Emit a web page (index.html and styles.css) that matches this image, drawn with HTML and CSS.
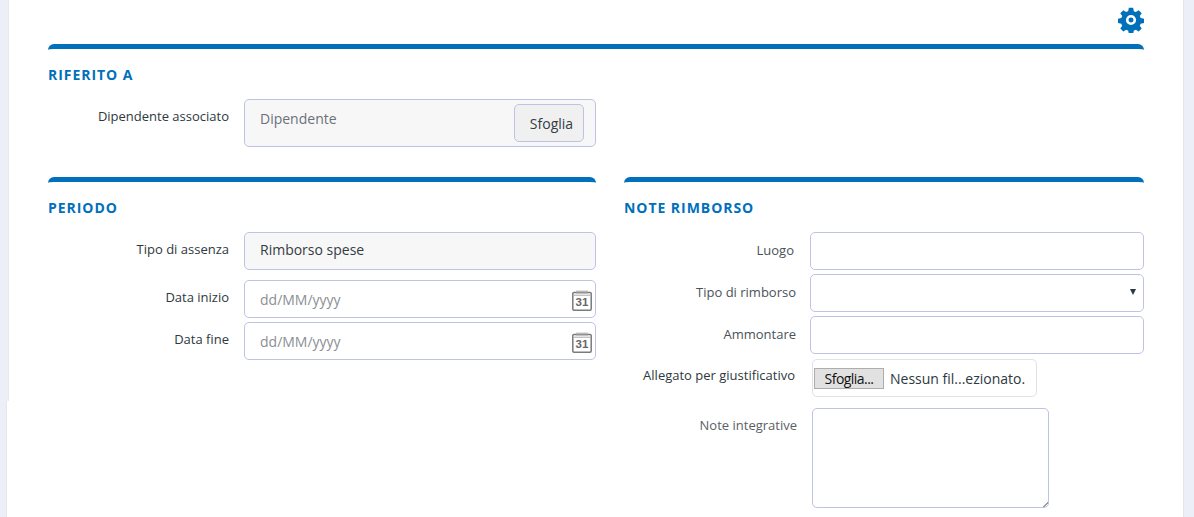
FILE: index.html
```html
<!DOCTYPE html>
<html lang="it">
<head>
<meta charset="utf-8">
<title>Rimborso spese</title>
<link rel="stylesheet" href="styles.css">
</head>
<body>
<div class="shell">
  <div class="toolbar">
    <svg class="gear" viewBox="0 0 24 24" width="26" height="26" aria-hidden="true"><path fill="#0070bb" fill-rule="evenodd" d="M10 0.8h4l.6 3.1c.7.2 1.3.5 1.9.8l2.6-1.8 2.8 2.8-1.8 2.6c.4.6.6 1.2.8 1.9l3.1.6v4l-3.1.6c-.2.7-.5 1.3-.8 1.9l1.8 2.6-2.8 2.8-2.6-1.8c-.6.4-1.2.6-1.9.8l-.6 3.1h-4l-.6-3.1c-.7-.2-1.3-.5-1.9-.8l-2.6 1.8-2.8-2.8 1.8-2.6c-.4-.6-.6-1.2-.8-1.9l-3.1-.6v-4l3.1-.6c.2-.7.5-1.3.8-1.9L2.1 5.7l2.8-2.8 2.6 1.8c.6-.4 1.2-.6 1.9-.8zM12 7.3a4.7 4.7 0 1 0 0 9.4 4.7 4.7 0 0 0 0-9.4zM12 9.7a2.3 2.3 0 1 1 0 4.6 2.3 2.3 0 0 1 0-4.6z"/></svg>
  </div>

  <section class="section section-top">
    <h2 class="heading">RIFERITO A</h2>
    <div class="row">
      <label class="label label-top">Dipendente associato</label>
      <div class="lookup">
        <span class="lookup-text">Dipendente</span>
        <button class="browse" type="button">Sfoglia</button>
      </div>
    </div>
  </section>

  <div class="columns">
    <section class="section col-left">
      <h2 class="heading">PERIODO</h2>
      <div class="row row-first">
        <label class="label">Tipo di assenza</label>
        <div class="readonly">Rimborso spese</div>
      </div>
      <div class="row row-date-1">
        <label class="label">Data inizio</label>
        <div class="date">
          <input class="date-input" type="text" placeholder="dd/MM/yyyy">
          <svg class="cal" viewBox="0 0 20 21" width="20" height="21" aria-hidden="true"><rect x="0.8" y="2.4" width="18.4" height="17.8" rx="1.2" fill="#fff" stroke="#7a7a7a" stroke-width="1.5"/><path d="M4 1.2h12M4 3h12M2 5.2h16" stroke="#a8a8a8" stroke-width="1"/><text x="10" y="16" class="cal-num">31</text></svg>
        </div>
      </div>
      <div class="row row-date-2">
        <label class="label">Data fine</label>
        <div class="date">
          <input class="date-input" type="text" placeholder="dd/MM/yyyy">
          <svg class="cal" viewBox="0 0 20 21" width="20" height="21" aria-hidden="true"><rect x="0.8" y="2.4" width="18.4" height="17.8" rx="1.2" fill="#fff" stroke="#7a7a7a" stroke-width="1.5"/><path d="M4 1.2h12M4 3h12M2 5.2h16" stroke="#a8a8a8" stroke-width="1"/><text x="10" y="16" class="cal-num">31</text></svg>
        </div>
      </div>
    </section>

    <section class="section col-right">
      <h2 class="heading">NOTE RIMBORSO</h2>
      <div class="form-r">
        <div class="r-row r-luogo">
          <label class="r-label">Luogo</label>
          <input class="r-field" type="text">
        </div>
        <div class="r-row r-tipo">
          <label class="r-label r-label-wide">Tipo di rimborso</label>
          <div class="r-field r-select"><span class="caret"></span></div>
        </div>
        <div class="r-row r-amm">
          <label class="r-label r-label-wide">Ammontare</label>
          <input class="r-field" type="text">
        </div>
        <div class="r-row r-file">
          <label class="r-label r-label-file">Allegato per giustificativo</label>
          <div class="file-box"><span class="file-btn">Sfoglia...</span><span class="file-text">Nessun fil...ezionato.</span></div>
        </div>
        <div class="r-row r-note">
          <label class="r-label r-label-note">Note integrative</label>
          <textarea class="note-area"></textarea>
        </div>
      </div>
    </section>
  </div>
</div>
</body>
</html>
```

FILE: styles.css
```css
* { box-sizing: border-box; }
html, body { margin: 0; padding: 0; height: 517px; overflow: hidden; }
body {
  background: #eceef8;
  font-family: "Open Sans", "Noto Sans", sans-serif;
  font-size: 13px;
  color: #333c44;
}
.shell {
  margin: 0 10px 0 6px;
  height: 517px;
  padding: 0 40px 0 42px;
  background:
    linear-gradient(#e8e8ee, #e8e8ee) 2px 0 / 1px 401px no-repeat,
    linear-gradient(#eceef8, #eceef8) left top / 2px 401px no-repeat,
    linear-gradient(#e6e6ec, #e6e6ec) left bottom / 1px 116px no-repeat,
    linear-gradient(#e4e4ea, #e4e4ea) right top / 1px 100% no-repeat,
    #fff;
}
.toolbar {
  height: 44px;
  display: flex;
  justify-content: flex-end;
  padding: 7px 0 0 0;
}
.gear { display: block; }
.section {
  border-top: 5px solid #0070bb;
  border-radius: 6px 6px 0 0;
}
.section-top { height: 133px; }
.heading {
  margin: 0;
  padding-top: 17px;
  height: 50px;
  font-size: 14px;
  line-height: 18px;
  font-weight: 700;
  letter-spacing: 0.95px;
  color: #0070bb;
}
.row { display: flex; align-items: flex-start; }
.label {
  width: 181px;
  margin-right: 15px;
  text-align: right;
  line-height: 18px;
  padding-top: 8px;
  color: #2e3840;
}
.label-top { padding-top: 8px; }
.lookup {
  width: 352px;
  height: 48px;
  display: flex;
  align-items: center;
  justify-content: space-between;
  padding: 0 11px 0 15px;
  background: #f7f7f7;
  border: 1px solid #bec3e3;
  border-radius: 5px;
}
.lookup-text { font-size: 14px; color: #6b7177; margin-top: -9px; }
.browse {
  height: 38px;
  width: 70px;
  font: inherit;
  font-size: 14px;
  color: #333c44;
  background: #f0f0f0;
  border: 1px solid #bec3e3;
  border-radius: 5px;
  padding: 0 0 0 5px;
}
.columns { display: flex; gap: 28px; }
.col-left { width: 548px; }
.col-right { width: 520px; }
.readonly {
  width: 352px;
  height: 38px;
  line-height: 34px;
  padding-left: 15px;
  font-size: 14px;
  background: #f7f7f7;
  border: 1px solid #bec3e3;
  border-radius: 5px;
}
.row-date-1 { margin-top: 10px; }
.row-date-2 { margin-top: 4px; }
.date { position: relative; width: 352px; height: 38px; }
.date-input {
  display: block;
  width: 100%;
  height: 100%;
  padding: 0 40px 0 15px;
  font: inherit;
  font-size: 14px;
  background: #fff;
  border: 1px solid #bec3e3;
  border-radius: 5px;
}
.date-input::placeholder { color: #8b8f94; opacity: 1; }
.cal { position: absolute; right: 4px; top: 10px; }
.cal-num {
  font-family: "Liberation Sans", sans-serif;
  font-size: 11.5px;
  font-weight: 700;
  text-anchor: middle;
  fill: #666;
}
.r-row { display: flex; align-items: flex-start; }
.r-label {
  width: 170px;
  margin-right: 16px;
  text-align: right;
  line-height: 18px;
  padding-top: 9px;
  color: #4a5259;
}
.r-label-wide { width: 172px; margin-right: 14px; }
.r-label-file { width: 171px; margin-right: 17px; padding-top: 7px; color: #2e3840; }
.r-label-note { width: 173px; margin-right: 15px; padding-top: 8px; color: #5a6167; }
.r-field {
  display: block;
  width: 334px;
  height: 38px;
  background: #fff;
  border: 1px solid #bec3e3;
  border-radius: 5px;
  position: relative;
}
.r-tipo { margin-top: 4px; }
.r-amm { margin-top: 4px; }
.r-file { margin-top: 5px; }
.r-note { margin-top: 11px; }
.caret {
  position: absolute;
  right: 7px;
  top: 14px;
  width: 0;
  height: 0;
  border-left: 3.5px solid transparent;
  border-right: 3.5px solid transparent;
  border-top: 6px solid #2b3640;
}
.file-box {
  width: 225px;
  height: 38px;
  display: flex;
  align-items: center;
  padding-left: 1px;
  border: 1px solid #e2e2e6;
  border-radius: 5px;
  background: #fff;
}
.file-btn {
  width: 70px;
  height: 21px;
  line-height: 19px;
  text-align: center;
  font-size: 14px;
  letter-spacing: -0.55px;
  color: #111;
  background: #e1e1e1;
  border: 1px solid #adadad;
}
.file-text { margin-left: 6px; font-size: 14px; white-space: nowrap; color: #2e3840; }
.note-area {
  display: block;
  width: 237px;
  height: 100px;
  margin: 0;
  background: #fff;
  border: 1px solid #bec3e3;
  border-radius: 5px;
}
.note-area::-webkit-resizer {
  background: linear-gradient(135deg, transparent 82%, #999 82%, #999 90%, transparent 90%);
}
```
